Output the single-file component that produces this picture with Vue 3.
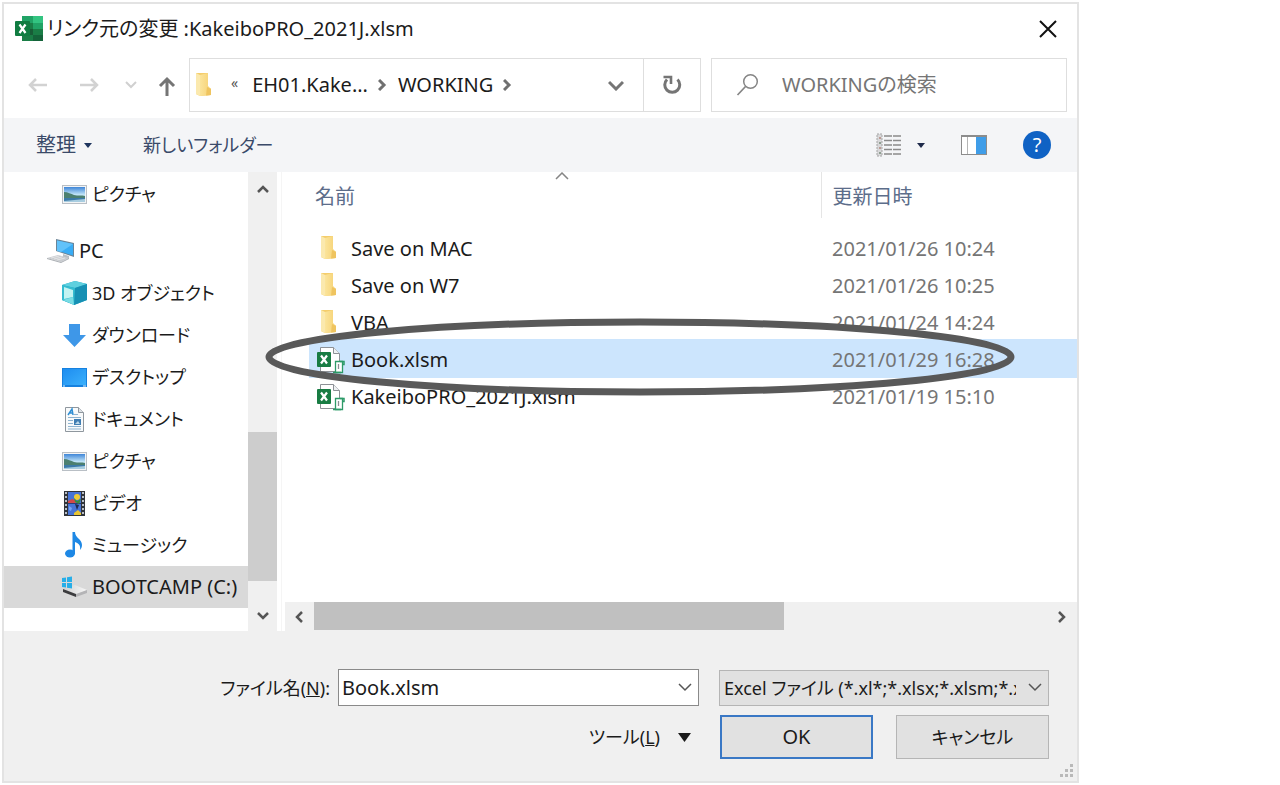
<script setup>
import { ref } from 'vue'

const places = [
  { icon: 'picture', label: 'ピクチャ', gap: true },
  { icon: 'pc', label: 'PC', root: true, latin: true },
  { icon: 'cube', label: '3D オブジェクト' },
  { icon: 'download', label: 'ダウンロード' },
  { icon: 'desktop', label: 'デスクトップ' },
  { icon: 'document', label: 'ドキュメント' },
  { icon: 'picture', label: 'ピクチャ' },
  { icon: 'video', label: 'ビデオ' },
  { icon: 'music', label: 'ミュージック' },
  { icon: 'drive', label: 'BOOTCAMP (C:)', active: true, latin: true },
]

const files = [
  { name: 'Save on MAC', date: '2021/01/26 10:24', folder: true },
  { name: 'Save on W7', date: '2021/01/26 10:25', folder: true },
  { name: 'VBA', date: '2021/01/24 14:24', folder: true },
  { name: 'Book.xlsm', date: '2021/01/29 16:28' },
  { name: 'KakeiboPRO_2021J.xlsm', date: '2021/01/19 15:10' },
]

const fileName = ref('Book.xlsm')
</script>

<template>
  <main class="dialog">
    <svg class="defs" aria-hidden="true">
      <defs>
        <linearGradient id="folderFront" x1="0" y1="0" x2="1" y2="0">
          <stop offset="0" stop-color="#fbe49b" />
          <stop offset="1" stop-color="#f6d173" />
        </linearGradient>
        <linearGradient id="skyFill" x1="0" y1="0" x2="0" y2="1">
          <stop offset="0" stop-color="#3f86d8" />
          <stop offset="0.5" stop-color="#bfe3f7" />
          <stop offset="1" stop-color="#e4f2f8" />
        </linearGradient>
        <linearGradient id="screenFill" x1="0" y1="0" x2="1" y2="1">
          <stop offset="0" stop-color="#1e8df0" />
          <stop offset="1" stop-color="#3bb0fb" />
        </linearGradient>
        <linearGradient id="driveTop" x1="0" y1="0" x2="1" y2="0">
          <stop offset="0" stop-color="#d0d0d0" />
          <stop offset="1" stop-color="#f7f7f7" />
        </linearGradient>
        <symbol id="folder" viewBox="0 0 18 24">
          <path d="M1 1h12v14l3 2v6l-11 1-4-2z" fill="#f4cd6c" />
          <path d="M1 1l4 2v21l-4-2z" fill="#fbe9ae" />
          <path d="M5 3l8-2v13l3 3v6l-11 1z" fill="url(#folderFront)" />
          <path d="M12 15l4 2v6l-5 .5z" fill="#efc45f" />
        </symbol>
      </defs>
    </svg>

    <header class="titlebar">
      <svg class="logo" width="28" height="26" viewBox="0 0 28 26" aria-hidden="true">
        <rect x="7" y="0" width="21" height="25" fill="#1a7d46" />
        <rect x="7" y="0" width="11" height="7" fill="#21a366" />
        <rect x="18" y="0" width="10" height="7" fill="#33c481" />
        <rect x="18" y="7" width="10" height="6" fill="#21a366" />
        <rect x="7" y="13" width="11" height="6" fill="#185c37" />
        <rect x="18" y="19" width="10" height="6" fill="#14633a" />
        <rect x="0" y="5" width="15" height="15" rx="1" fill="#107c41" />
        <path d="M4.500 8.500l6 8.500M10.500 8.500l-6 8.500" stroke="#fff" stroke-width="2.200" />
      </svg>
      <h1>リンク元の変更 :KakeiboPRO_2021J.xlsm</h1>
      <button class="close" aria-label="閉じる">
        <svg width="18" height="18" viewBox="0 0 18 18"><path d="M1 1l16 16M17 1L1 17" stroke="#111" stroke-width="2" /></svg>
      </button>
    </header>

    <nav class="navrow">
      <button class="nb back" aria-label="戻る">
        <svg width="20" height="16" viewBox="0 0 20 16"><path d="M19 8H2M8 2L2 8l6 6" fill="none" stroke="#d2d2d2" stroke-width="2.500" /></svg>
      </button>
      <button class="nb forward" aria-label="進む">
        <svg width="20" height="16" viewBox="0 0 20 16"><path d="M1 8h17M12 2l6 6-6 6" fill="none" stroke="#d2d2d2" stroke-width="2.500" /></svg>
      </button>
      <button class="nb recent" aria-label="最近表示した場所">
        <svg width="12" height="8" viewBox="0 0 12 8"><path d="M1 1l5 5 5-5" fill="none" stroke="#d0d0d0" stroke-width="2" /></svg>
      </button>
      <button class="nb up" aria-label="上へ">
        <svg width="18" height="20" viewBox="0 0 18 20"><path d="M9 20V3M2 10l7-7 7 7" fill="none" stroke="#757575" stroke-width="3" /></svg>
      </button>
      <div class="address">
        <svg class="afolder" width="18" height="24" aria-hidden="true"><use href="#folder" /></svg>
        <span class="more">«</span>
        <button class="crumb">EH01.Kake...</button>
        <svg class="sep" width="9" height="12" viewBox="0 0 9 12"><path d="M1 1l5 5-5 5" fill="none" stroke="#707070" stroke-width="3" /></svg>
        <button class="crumb">WORKING</button>
        <svg class="sep" width="9" height="12" viewBox="0 0 9 12"><path d="M1 1l5 5-5 5" fill="none" stroke="#707070" stroke-width="3" /></svg>
        <button class="nb history" aria-label="以前の場所">
          <svg width="16" height="11" viewBox="0 0 16 11"><path d="M1 2l7 7 7-7" fill="none" stroke="#757575" stroke-width="3" /></svg>
        </button>
        <button class="nb refresh" aria-label="更新">
          <svg width="20" height="20" viewBox="0 0 20 20"><path d="M15.500 4.500A7.500 7.500 0 1 1 5 4.500" fill="none" stroke="#757575" stroke-width="3" /><path d="M1.500 2h7.500v7" fill="none" stroke="#757575" stroke-width="2.600" /></svg>
        </button>
      </div>
      <label class="search">
        <svg width="24" height="24" viewBox="0 0 24 24" aria-hidden="true"><circle cx="14.500" cy="8.500" r="6.800" fill="none" stroke="#858585" stroke-width="1.500" /><path d="M9.500 13.500L1.500 22" stroke="#858585" stroke-width="1.700" /></svg>
        <input type="search" placeholder="WORKINGの検索" aria-label="WORKINGの検索" />
      </label>
    </nav>

    <div class="toolbar">
      <button class="tool">整理
        <svg width="8" height="5" viewBox="0 0 8 5"><path d="M0 0h8L4 5z" fill="#1e355e" /></svg>
      </button>
      <button class="tool newfolder">新しいフォルダー</button>
      <div class="views">
        <button class="nb" aria-label="表示方法">
          <svg width="26" height="24" viewBox="0 0 26 24">
            <rect x="1" y="1" width="5" height="22" fill="#d8d8da" stroke="#a5a5a5" stroke-dasharray="2 1" />
            <path d="M3 5h2M3 15h2" stroke="#b3867e" stroke-width="1.500" />
            <path d="M3 10h2M3 20h2" stroke="#768a79" stroke-width="1.500" />
            <path d="M8 3h17M8 7.500h17M8 12h17M8 16.500h17M8 21h17" stroke="#8b8b8b" stroke-width="1.300" stroke-dasharray="8 1" />
          </svg>
        </button>
        <button class="nb drop" aria-label="その他のオプション">
          <svg width="8" height="5" viewBox="0 0 8 5"><path d="M0 0h8L4 5z" fill="#1e2a4a" /></svg>
        </button>
        <button class="nb preview" aria-label="プレビュー ウィンドウ">
          <svg width="26" height="20" viewBox="0 0 26 20">
            <rect x="0.500" y="0.500" width="25" height="19" fill="#fff" stroke="#8c8c8c" />
            <path d="M1 1h24" stroke="#8c8c8c" stroke-width="2" />
            <path d="M6.500 2v17" stroke="#b5b5b5" />
            <rect x="15" y="2" width="10" height="17" fill="#3f9de8" />
          </svg>
        </button>
        <button class="help" aria-label="ヘルプ">?</button>
      </div>
    </div>

    <section class="body">
      <ul class="places">
        <li v-for="(p, i) in places" :key="i" :class="{ root: p.root, active: p.active, gap: p.gap, kana: !p.latin }">
          <svg class="picon" width="28" height="28" viewBox="0 0 28 28" aria-hidden="true">
            <g v-if="p.icon === 'picture'">
              <rect x="2.500" y="5.500" width="24" height="18" fill="#f3f4f5" stroke="#b9bfc5" />
              <rect x="4" y="7" width="21" height="15" fill="url(#skyFill)" />
              <path d="M4 12c4 0 7 2 10 3 4 1 8 0 11 1v2H4z" fill="#4c8070" />
              <path d="M4 18h21v2L4 22z" fill="#3c7aa8" />
              <path d="M4 21l21-2v3H4z" fill="#a8cde0" />
            </g>
            <g v-else-if="p.icon === 'pc'">
              <path d="M9 2l18 4v14L9 14z" fill="#6b8497" />
              <path d="M10 3.500l16 3.500v11.500L10 13.500z" fill="#39acf5" />
              <path d="M10 3.500l16 3.500-12 8-4-1z" fill="#62c2fa" />
              <path d="M16 17l6 2v3l-6-2z" fill="#b9bfc4" />
              <path d="M0 21l11-3 11 3-8 4z" fill="#c9ccd0" />
              <path d="M0 21l14 4v1L0 22zM14 25l8-4v1l-8 4z" fill="#a9adb2" />
              <path d="M4 21l8-2M7 22l8-2M10 23l8-2" stroke="#e4e4e6" />
            </g>
            <g v-else-if="p.icon === 'cube'">
              <path d="M2 6l13-4 12 3v16l-13 5-12-5z" fill="#1fa5c4" />
              <path d="M2 6l13-4 12 3-12 4z" fill="#5fd0df" />
              <path d="M2 6l13 3v17L2 21z" fill="#35bcd0" />
              <path d="M15 9l12-4v16l-13 5z" fill="#1690b4" />
              <path d="M4 8l9 3v7l-9 2z" fill="#c2f3f2" />
              <path d="M3 21l10-3 1 8z" fill="#79dce4" />
            </g>
            <path v-else-if="p.icon === 'download'" d="M9 3h11v11h6L14.500 26 3 14h6z" fill="#3e97e8" />
            <g v-else-if="p.icon === 'desktop'">
              <rect x="2" y="5" width="25" height="19" fill="#1681df" />
              <rect x="3" y="6" width="23" height="16" fill="url(#screenFill)" />
              <path d="M3 23h2M23 23h3" stroke="#d9efff" />
            </g>
            <g v-else-if="p.icon === 'document'">
              <path d="M5.500 2.500h13l5 5v19h-18z" fill="#f8fafb" stroke="#8f979e" />
              <path d="M18.500 2.500v5h5" fill="#dde2e6" stroke="#8f979e" />
              <path d="M8 10l4-6 1 6M10 8h3" fill="none" stroke="#2f8fd4" stroke-width="1.500" />
              <path d="M14 9.500h4M8 12.500h13M8 15.500h5M8 18.500h5M8 21.500h13M8 24h13" stroke="#8fb4d0" />
              <rect x="14" y="14" width="7" height="6" fill="#3f7db2" />
              <path d="M15 19l3-3 2 3z" fill="#bcd8e8" />
            </g>
            <g v-else-if="p.icon === 'video'">
              <rect x="4" y="2" width="21" height="25" fill="#30343a" />
              <rect x="8" y="3" width="13" height="23" fill="#4774d6" />
              <path d="M6 3v23M23 3v23" stroke="#b9bec6" stroke-width="2" stroke-dasharray="2 2" />
              <path d="M8 14.500h13" stroke="#283e77" />
              <path d="M8 12l4-2 3 1 1 3H8z" fill="#d34848" />
              <circle cx="17" cy="8" r="3" fill="#f0cb35" />
              <path d="M14 9l3 3 4-2-2 5-4-2z" fill="#3b8b3b" />
              <path d="M15 15l4 1-2 5z" fill="#202b50" />
              <path d="M14 24l4-3 3 3v2h-7z" fill="#e9c532" />
              <path d="M9 17l3 2-1 3-2-1z" fill="#76a4f3" />
            </g>
            <g v-else-if="p.icon === 'music'">
              <ellipse cx="10" cy="22.500" rx="5" ry="4" fill="#1e88e5" />
              <path d="M12.500 1h2.500c0 6 7 7 7 13 0 2-1 4-2 5 1-5-2-7-5-8v12h-2.500z" fill="#1e88e5" />
            </g>
            <g v-else>
              <path d="M3 15l12-3 12 5-11 5z" fill="url(#driveTop)" />
              <path d="M3 16l13 5v3L3 19z" fill="#3c3c3e" />
              <path d="M16 21l11-4v3l-11 4z" fill="#b4b4b6" />
              <path d="M2 5l4-.6v4.600H2zM7 4.200l5-.7V9H7zM2 10h4v4.500l-4-.5zM7 10h5v5.500l-5-.8z" fill="#27aee8" />
            </g>
          </svg>
          <a href="#">{{ p.label }}</a>
        </li>
      </ul>

      <div class="vscroll">
        <svg width="12" height="8" viewBox="0 0 12 8"><path d="M1 7l5-5 5 5" fill="none" stroke="#555" stroke-width="2.500" /></svg>
        <div class="vthumb"></div>
        <svg width="12" height="8" viewBox="0 0 12 8"><path d="M1 1l5 5 5-5" fill="none" stroke="#555" stroke-width="2.500" /></svg>
      </div>

      <div class="files">
        <table>
          <thead>
            <tr>
              <th class="cname" scope="col">名前
                <svg class="sort" width="14" height="8" viewBox="0 0 14 8"><path d="M1 7l6-6 6 6" fill="none" stroke="#858585" stroke-width="1.500" /></svg>
              </th>
              <th class="cdate" scope="col">更新日時</th>
            </tr>
          </thead>
          <tbody>
            <tr v-for="f in files" :key="f.name" :class="{ selected: f.name === fileName }">
              <td class="cname">
                <div class="file">
                  <svg v-if="f.folder" class="ficon" width="28" height="28" viewBox="0 0 28 28" aria-hidden="true"><use href="#folder" x="3" y="0" width="18" height="24" /></svg>
                  <svg v-else class="ficon" width="28" height="28" viewBox="0 0 28 28" aria-hidden="true">
                    <path d="M3.500 1.500h13l6 6v18h-19z" fill="#fff" stroke="#8d9196" />
                    <path d="M16.500 1.500v6h6" fill="#eef1f3" stroke="#8d9196" />
                    <rect x="0" y="6" width="14" height="15" rx="1" fill="#187c43" />
                    <path d="M4 9.500l6 8M10 9.500l-6 8" stroke="#fff" stroke-width="2.200" />
                    <path d="M18.500 15.500h7v11h-7z" fill="#fff" stroke="#2d9a68" stroke-width="1.300" />
                    <path d="M23 15.500h4v3h-2M16 26.500h8" fill="none" stroke="#2d9a68" stroke-width="1.500" />
                    <path d="M21.500 18v5" stroke="#8a8f94" stroke-width="1.300" />
                  </svg>
                  <span>{{ f.name }}</span>
                </div>
              </td>
              <td class="cdate">{{ f.date }}</td>
            </tr>
          </tbody>
        </table>
        <div class="hscroll">
          <svg width="8" height="12" viewBox="0 0 8 12"><path d="M7 1L2 6l5 5" fill="none" stroke="#555" stroke-width="2.500" /></svg>
          <div class="htrack"><div class="hthumb"></div></div>
          <svg width="8" height="12" viewBox="0 0 8 12"><path d="M1 1l5 5-5 5" fill="none" stroke="#555" stroke-width="2.500" /></svg>
        </div>
      </div>

      <svg class="ring" viewBox="0 0 750 78" preserveAspectRatio="none" aria-hidden="true">
        <ellipse cx="375" cy="39" rx="371" ry="35" fill="none" stroke="#595959" stroke-width="7" vector-effect="non-scaling-stroke" />
      </svg>
    </section>

    <footer class="footer">
      <div class="line">
        <label class="flabel" for="fname">ファイル名(<u>N</u>):</label>
        <div class="combo">
          <input id="fname" v-model="fileName" type="text" />
          <button class="nb" aria-label="ファイル名の一覧">
            <svg width="14" height="9" viewBox="0 0 14 9"><path d="M1 1l6 6 6-6" fill="none" stroke="#555" stroke-width="1.500" /></svg>
          </button>
        </div>
        <div class="filter">
          <select aria-label="ファイルの種類">
            <option>Excel ファイル (*.xl*;*.xlsx;*.xlsm;*.xlsb)</option>
          </select>
          <svg width="14" height="9" viewBox="0 0 14 9" aria-hidden="true"><path d="M1 1l6 6 6-6" fill="none" stroke="#555" stroke-width="1.500" /></svg>
        </div>
      </div>
      <div class="line second">
        <button class="tools">ツール(<u>L</u>)
          <svg width="13" height="9" viewBox="0 0 13 9"><path d="M0 0h13L6.500 9z" fill="#1a1a1a" /></svg>
        </button>
        <button class="push ok">OK</button>
        <button class="push cancel">キャンセル</button>
      </div>
      <svg class="grip" width="16" height="16" viewBox="0 0 16 16" aria-hidden="true">
        <path d="M11 1h3v3h-3zM6 6h3v3H6zM11 6h3v3h-3zM1 11h3v3H1zM6 11h3v3H6zM11 11h3v3h-3z" fill="#b9b9b9" />
      </svg>
    </footer>
  </main>
</template>

<style>
body {
  background: #fff;
}
</style>

<style scoped>
.dialog,
.dialog * {
  box-sizing: border-box;
}
.dialog {
  margin: 2px 201px 0 2px;
  border: 2px solid #e3e3e3;
  background: #fff;
  color: #1b1b1b;
  font: 20px/28px "Noto Sans", "Noto Sans CJK JP", sans-serif;
  font-feature-settings: "palt";
}
.defs {
  position: absolute;
  width: 0;
  height: 0;
}
button,
input,
select {
  font: inherit;
  font-feature-settings: inherit;
  color: inherit;
  border: 0;
  padding: 0;
  margin: 0;
  background: none;
  border-radius: 0;
}
button {
  white-space: nowrap;
}
svg {
  display: block;
  flex: none;
}
.nb {
  display: flex;
  align-items: center;
  justify-content: center;
  flex: none;
}

.titlebar {
  display: flex;
  align-items: center;
  height: 54px;
  padding: 0 20px 4px 11px;
}
.titlebar h1 {
  flex: 1;
  margin: 0 0 0 4px;
  font-size: 20px;
  font-weight: 400;
}

.navrow {
  display: flex;
  align-items: center;
  height: 54px;
  padding: 0 10px 0 24px;
}
.forward {
  margin-left: 31px;
}
.recent {
  margin-left: 26px;
}
.up {
  margin-left: 21px;
  margin-top: 2px;
}
.address {
  display: flex;
  align-items: center;
  flex: 0 0 512px;
  align-self: stretch;
  margin-left: 13px;
  border: 1px solid #dedede;
}
.afolder {
  margin-left: 5px;
  margin-bottom: 3px;
}
.more {
  margin: 0 14px 4px 18px;
  font-size: 14px;
  color: #555;
}
.sep {
  margin: 0 11px 0 10px;
}
.history {
  width: 54px;
  margin-left: auto;
}
.refresh {
  align-self: stretch;
  width: 57px;
  border-left: 1px solid #dedede;
}
.search {
  display: flex;
  align-items: center;
  flex: 1;
  align-self: stretch;
  min-width: 0;
  margin-left: 10px;
  padding-left: 24px;
  border: 1px solid #dedede;
}
.search input {
  flex: 1;
  min-width: 0;
  margin-left: 22px;
  outline: 0;
}
.search input::placeholder {
  color: #757575;
  opacity: 1;
}

.toolbar {
  display: flex;
  align-items: center;
  height: 54px;
  margin-top: 6px;
  padding: 0 26px 0 32px;
  background: #f4f5f7;
  color: #3a4a69;
}
.tool {
  display: flex;
  align-items: center;
  gap: 8px;
}
.newfolder {
  margin-left: 51px;
  font-size: 18px;
}
.views {
  display: flex;
  align-items: center;
  margin-left: auto;
}
.drop {
  margin-left: 15px;
}
.preview {
  margin-left: 36px;
}
.help {
  width: 28px;
  height: 28px;
  margin-left: 36px;
  border-radius: 50%;
  background: #0f62c4;
  color: #fff;
}

.body {
  display: flex;
  position: relative;
  height: 459px;
}
.places {
  flex: 0 0 244px;
  margin: 0;
  padding: 0;
  list-style: none;
}
.places li {
  display: flex;
  align-items: center;
  gap: 4px;
  height: 42px;
  padding-left: 56px;
  white-space: nowrap;
}
.places li.kana {
  font-size: 18px;
}
.places li.gap {
  margin: 1px 0 15px;
}
.places li.root {
  padding-left: 43px;
}
.places li.active {
  background: #d9d9d9;
}
.places a {
  color: inherit;
  text-decoration: none;
}
.vscroll {
  display: flex;
  flex-direction: column;
  align-items: center;
  flex: 0 0 29px;
  padding: 13px 0 11px;
  background: #f0f0f0;
}
.vthumb {
  width: 100%;
  height: 149px;
  margin: auto 0 31px;
  background: #cdcdcd;
}
.files {
  display: flex;
  flex-direction: column;
  flex: 1;
  min-width: 0;
  margin-left: 4px;
  padding-left: 3px;
  border-left: 1px solid #f5f5f5;
}
table {
  width: calc(100% - 24px);
  margin-left: 24px;
  border-collapse: collapse;
  table-layout: fixed;
}
th {
  position: relative;
  height: 46px;
  padding: 3px 0 0 6px;
  color: #5c6d8a;
  font-weight: 400;
  text-align: left;
}
th.cname {
  width: 512px;
}
th.cdate {
  padding-left: 11px;
  border-left: 1px solid #e5e5e5;
}
.sort {
  position: absolute;
  top: 0;
  left: 246px;
}
tbody::before {
  content: "";
  display: block;
  height: 12px;
}
td {
  height: 37px;
  padding: 1px 0 0 8px;
}
td.cdate {
  padding-left: 11px;
  color: #757575;
}
.selected {
  background: #cce5fd;
  box-shadow: 0 -2px #cce5fd;
}
.file {
  display: flex;
  align-items: center;
  gap: 6px;
}
.hscroll {
  display: flex;
  align-items: center;
  height: 29px;
  margin-top: auto;
  padding: 0 11px 0 10px;
  background: #f0f0f0;
}
.htrack {
  flex: 1;
  align-self: stretch;
  margin: 0 10px 0 11px;
}
.hthumb {
  width: 64%;
  height: 28px;
  background: #c0c0c0;
}
.ring {
  position: absolute;
  top: 146px;
  left: 261px;
  width: calc(100% - 323px);
  height: 78px;
  pointer-events: none;
}

.footer {
  position: relative;
  padding: 38px 28px 22px;
  background: #f0f0f0;
}
.line {
  display: flex;
  justify-content: flex-end;
  align-items: center;
}
.second {
  margin-top: 9px;
}
.flabel {
  margin-right: 8px;
  font-size: 18px;
  white-space: nowrap;
}
.combo {
  display: flex;
  flex: 0 0 361px;
  height: 37px;
  padding: 0 6px 0 3px;
  border: 1px solid #8a8a8a;
  background: #fff;
}
.combo input {
  flex: 1;
  min-width: 0;
  outline: 0;
}
.filter {
  position: relative;
  flex: 0 0 330px;
  margin-left: 20px;
}
.filter select {
  display: block;
  width: 100%;
  height: 36px;
  padding: 0 32px 0 4px;
  border: 1px solid #b5b5b5;
  background: #e1e1e1;
  font-size: 18px;
  appearance: none;
}
.filter svg {
  position: absolute;
  top: 13px;
  right: 7px;
  pointer-events: none;
}
.tools {
  display: flex;
  align-items: center;
  margin-right: 29px;
  font-size: 18px;
}
.tools svg {
  margin-left: 18px;
}
.push {
  width: 153px;
  height: 44px;
  margin-left: 23px;
  border: 1px solid #b5b5b5;
  background: #e1e1e1;
}
.push.ok {
  margin-left: 0;
  border: 2px solid #3a78c5;
}
.push.cancel {
  font-size: 18px;
}
.grip {
  position: absolute;
  right: 2px;
  bottom: 2px;
}
</style>
